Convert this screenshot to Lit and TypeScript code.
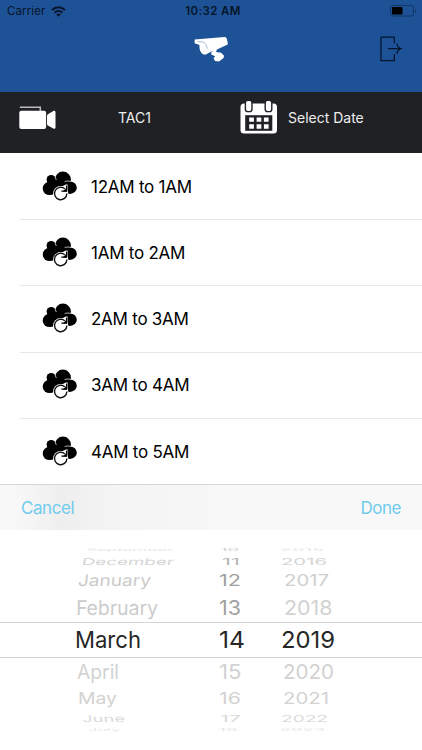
import { LitElement, html, css, svg } from "lit";
import { customElement } from "lit/decorators.js";
import { styleMap } from "lit/directives/style-map.js";

const FAMILY = 'Inter, "Liberation Sans", sans-serif';
const pen = document.createElement("canvas").getContext("2d")!;

// A wheel cell: label, left edge inside the wheel, drawn width.
type Cell = [string, number, number];
interface WheelRow {
  height: number;
  scaleY: number;
  skew: number;
  tones: [string, string, string];
  cells: [Cell, Cell, Cell];
}

const WHEEL: WheelRow[] = [
  { height: 11, scaleY: 0.15, skew: -6, tones: ["#e6e6e6", "#cfcfcf", "#e6e6e6"], cells: [["September", 86, 88], ["10", 220, 19], ["2015", 280, 44]] },
  { height: 13, scaleY: 0.4, skew: -6, tones: ["#d4d4d4", "#b8b8b8", "#d4d4d4"], cells: [["December", 81.5, 92], ["11", 222, 18], ["2016", 281, 46]] },
  { height: 26, scaleY: 0.68, skew: -5, tones: ["#cbcbcb", "#9f9f9f", "#cfcfcf"], cells: [["January", 78, 73], ["12", 219, 22], ["2017", 284, 45]] },
  { height: 28, scaleY: 0.86, skew: -1, tones: ["#cccccc", "#a0a0a0", "#d2d2d2"], cells: [["February", 76, 82], ["13", 219, 22], ["2018", 283.5, 48.5]] },
  { height: 36, scaleY: 1, skew: 0, tones: ["#262626", "#262626", "#262626"], cells: [["March", 75, 66], ["14", 218.5, 26], ["2019", 281, 54]] },
  { height: 28, scaleY: 0.86, skew: 0, tones: ["#d2d2d2", "#d2d2d2", "#d2d2d2"], cells: [["April", 76.5, 42], ["15", 219, 22.5], ["2020", 283, 51]] },
  { height: 26, scaleY: 0.68, skew: 0, tones: ["#d2d2d2", "#d2d2d2", "#d2d2d2"], cells: [["May", 78, 39], ["16", 219, 22], ["2021", 282.5, 46]] },
  { height: 14, scaleY: 0.4, skew: 4, tones: ["#dadada", "#dadada", "#dadada"], cells: [["June", 82, 43], ["17", 219.5, 21], ["2022", 280.5, 47]] },
  { height: 8, scaleY: 0.16, skew: 4, tones: ["#e6e6e6", "#e6e6e6", "#e6e6e6"], cells: [["July", 88, 32], ["18", 218, 20], ["2023", 280, 45]] },
];

@customElement("date-wheel")
export class DateWheel extends LitElement {
  static styles = css`
    :host { display: block; padding-top: 14px; height: 206px; overflow: hidden; background: #fff; font: 23.5px Inter, "Liberation Sans", sans-serif; }
    .row { display: grid; grid-template-columns: 200px 70px 1fr; align-items: center; box-sizing: border-box; }
    .current { border-top: 1px solid #d4d4d4; border-bottom: 1px solid #d4d4d4; }
    .cell { display: flex; align-items: center; height: 0; white-space: nowrap; }
    .label { transform-origin: 0 50%; line-height: 28px; }
  `;
  render() {
    pen.font = `23.5px ${FAMILY}`;
    const columns = [0, 200, 270];
    return WHEEL.map((row) => html`
      <div class="row ${row.scaleY === 1 ? "current" : ""}" style=${styleMap({ height: `${row.height}px` })}>
        ${row.cells.map(([text, left, width], i) => html`
          <div class="cell"><span class="label" style=${styleMap({
            color: row.tones[i],
            marginLeft: `${left - columns[i]}px`,
            transform: `scale(${width / pen.measureText(text).width}, ${row.scaleY}) skewX(${i === 0 ? row.skew : 0}deg)`,
          })}>${text}</span></div>`)}
      </div>`);
  }
}

const wifi = svg`<svg class="wifi" viewBox="0 0 15 11" width="15" height="11">
  <g fill="none" stroke="#07142b" stroke-width="2"><path d="M1 4.1C4.7.3 10.3.3 14 4.1"/><path d="M3.6 6.7C5.9 4.4 9.1 4.4 11.4 6.7"/></g>
  <path d="M7.5 10.7 5.2 8.4c1.3-1.2 3.3-1.2 4.6 0z" fill="#07142b"/></svg>`;

const battery = svg`<svg class="battery" viewBox="0 0 27 12" width="27" height="12">
  <rect x=".5" y=".5" width="23" height="10.5" rx="2.5" fill="none" stroke="#143564"/>
  <rect x="2" y="2" width="10.5" height="7.5" rx="1" fill="#000"/><path d="M25 4v4c1.4-.7 1.4-3.3 0-4z" fill="#143564"/></svg>`;

const cctv = svg`<svg class="cctv" viewBox="0 0 36 28" width="36" height="28">
  <path fill="#fff" d="M1.6 4.4 31.6 2c1.2-.1 1.9.7 2.2 2l1 4c.2.9-.2 1.6-1.2 2L24 14.4l-1 2.6 5.2.8 2.8 3-.4 2.2-4.6 3.4-4-.4-1.4-2.8 1.6-2-4-1.6.2-2.4 2.2-1.8-6 3c-1.4 1.2-3.2 1.6-4.6.8-2.8-1.6-3.8-5-3.6-9.2L1.6 8.2z"/>
  <path d="M4.6 6.6c2.4.2 4.4-.2 6.4.8 1.8 1.2 3 3.8 3.2 6.4" fill="none" stroke="#7d9cc6" stroke-width=".7"/></svg>`;

const exit = svg`<svg class="exit" viewBox="0 0 22 26" width="22" height="26" fill="none" stroke="#04142d" stroke-width="1.25">
  <path d="M14.3 7.3V1H1v23.6h13.3v-6.5M8 12.7h12.8M16.9 7.5c.4 2.8 1.8 4.5 3.9 5.2-2.1.7-3.5 2.3-3.9 5.1"/></svg>`;

const camcorder = svg`<svg viewBox="0 0 38 24" width="38" height="24">
  <path d="M.8 1.2h20.5v4" fill="none" stroke="#bcbcbd" stroke-width="1.5"/>
  <rect x=".3" y="4.8" width="26.8" height="18.2" rx="2" fill="#fff"/>
  <path d="M28 10.2c0-1 .4-1.7 1.3-2.2l5-3c1.2-.6 2.2 0 2.2 1.3v15c0 1.3-1 1.9-2.2 1.3l-5-2.8c-.9-.5-1.3-1.1-1.3-2.1z" fill="#fff"/></svg>`;

const calendar = svg`<svg viewBox="0 0 38 34" width="38" height="34">
  <rect x=".5" y="3.5" width="36.5" height="30" rx="3.5" fill="#fff"/>
  <g fill="#fff" stroke="#202125" stroke-width="1.4"><rect x="5.4" y=".3" width="6.6" height="11.3" rx="2.4"/><rect x="25.2" y=".3" width="6.6" height="11.3" rx="2.4"/></g>
  <path d="M5.2 15.2h27.1v15.6H5.2z" fill="#202125"/>
  <path d="M9.2 17.4h4.7v4.4H9.2zM16.6 17.4h4.7v4.4h-4.7zM23.9 17.4h4.7v4.4h-4.7zM9.2 24.3h4.7v4.4H9.2zM16.6 24.3h4.7v4.4h-4.7zM23.9 24.3h4.7v4.4h-4.7z" fill="#fff"/></svg>`;

const cloud = () => svg`<svg class="cloud" viewBox="0 0 36 32" width="36" height="32">
  <g fill="#000"><ellipse cx="7.7" cy="17.4" rx="7" ry="6.7"/><circle cx="9.2" cy="8.6" r="4.6"/>
  <ellipse cx="20.9" cy="8.6" rx="8" ry="8"/><ellipse cx="28" cy="16.7" rx="6.8" ry="6.2"/><path d="M5 9.5h22l1 13H8z"/></g>
  <path d="M13.4 4.6c-.3 1.8.1 3.2 1.1 4.4M22.6 10.6c2-.8 4-.8 6.2 0" fill="none" stroke="#fff" stroke-width=".7"/>
  <circle cx="18.7" cy="22.6" r="7.6" fill="#fff"/>
  <path d="M19.4 17v-1.2l4.4-2.4h1.8v7.6z" fill="#fff"/>
  <path d="M22.8 17.8a6.2 6.2 0 1 0 2.1 4.8" fill="none" stroke="#111" stroke-width="1.4"/>
  <path d="M24.6 14.4v5.8h-5.2" fill="none" stroke="#000" stroke-width="1.3"/><path d="M24.8 16.4v4h-4z" fill="#000"/></svg>`;

@customElement("app-root")
export class AppRoot extends LitElement {
  static styles = css`
    :host { display: flex; flex-direction: column; width: 422px; height: 750px; overflow: hidden; background: #fff; color: #000; font-family: Inter, "Liberation Sans", sans-serif; }
    svg { display: block; flex: none; overflow: visible; }
    .header { height: 92px; background: #1e5296; }
    .status { display: grid; grid-template-columns: 1fr auto 1fr; align-items: center; height: 22px; padding: 0 5px 0 7px; color: #07142b; font-size: 11.5px; }
    .carrier { display: flex; align-items: center; gap: 6px; letter-spacing: .1px; }
    .clock { font-weight: 600; letter-spacing: .35px; padding-left: 2px; }
    .battery { justify-self: end; }
    .nav { display: grid; grid-template-columns: 1fr auto 1fr; align-items: center; height: 53px; padding: 0 20px; }
    .cctv { grid-column: 2; }
    .exit { justify-self: end; }
    .toolbar { display: flex; height: 61px; box-sizing: border-box; padding: 8px 0 0 19px; background: #202125; color: #eee; font-size: 14px; line-height: 36px; }
    .camera { width: 99px; padding-top: 6px; }
    .channel { width: 122px; }
    .calendar { width: 48px; }
    .row { display: flex; align-items: center; height: 66.2px; margin-left: 20px; padding-left: 22px; box-sizing: border-box; border-bottom: 1px solid #e8e8ea; font-size: 17px; letter-spacing: -.25px; }
    .row:last-child { border-bottom: 0; }
    .time { margin-left: 13px; }
    .list { height: 331px; padding-top: 1px; box-sizing: border-box; overflow: hidden; }
    .actions { display: flex; justify-content: space-between; align-items: center; height: 46px; box-sizing: border-box; padding: 0 21px; border-top: 1px solid #d6d6d6; color: #70cbed; font-size: 17px; letter-spacing: -.45px;
      background: linear-gradient(90deg, #f8f8f8 0 15px, #f4f4f4 35px, #eeeeee 62px, #f2f2f2 90px, #f5f5f5 130px, #f6f6f6 190px, #f8f8f8 220px); }
  `;
  private slots = ["12AM to 1AM", "1AM to 2AM", "2AM to 3AM", "3AM to 4AM", "4AM to 5AM"];
  render() {
    return html`
      <div class="header">
        <div class="status"><span class="carrier">Carrier ${wifi}</span><span class="clock">10:32 AM</span>${battery}</div>
        <div class="nav">${cctv}${exit}</div>
      </div>
      <div class="toolbar">
        <div class="camera">${camcorder}</div><div class="channel">TAC1</div>
        <div class="calendar">${calendar}</div><div class="date">Select Date</div>
      </div>
      <div class="list">${this.slots.map((s) => html`<div class="row">${cloud()}<span class="time">${s}</span></div>`)}</div>
      <div class="actions"><span>Cancel</span><span>Done</span></div>
      <date-wheel></date-wheel>`;
  }
}
